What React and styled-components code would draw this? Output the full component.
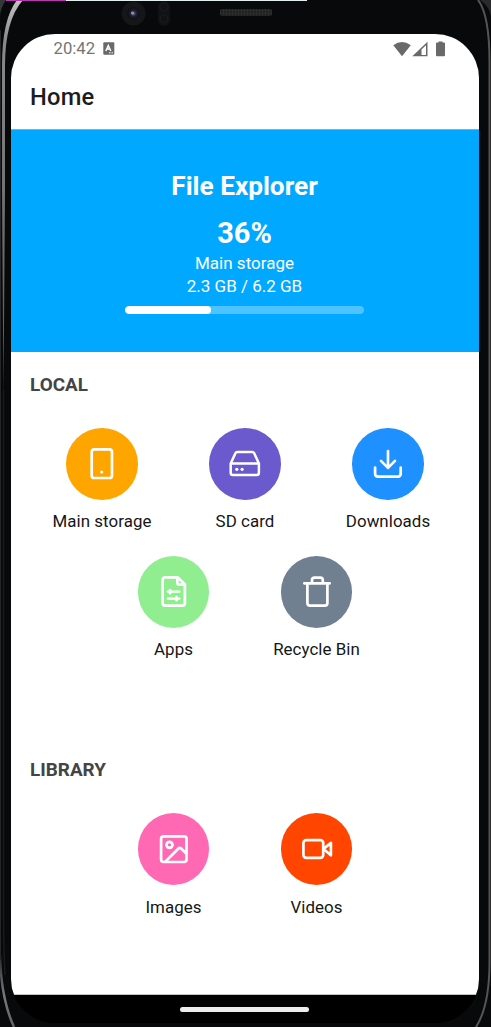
import React from "react";
import styled, { createGlobalStyle } from "styled-components";

const GlobalStyle = createGlobalStyle`
  * { box-sizing: border-box; }
  body { margin: 0; background: #08090a; font-family: Roboto, "Noto Sans", sans-serif; }
`;

const Phone = styled.div`
  position: relative;
  width: 491px;
  height: 1027px;
  overflow: hidden;
  padding: 34px 12px 4px 11px;
  background: #08090a;
`;

const Hardware = styled.svg`
  position: absolute;
  inset: 0;
  pointer-events: none;
`;

const Screen = styled.main`
  position: relative;
  display: flex;
  flex-direction: column;
  width: 468px;
  height: 989px;
  overflow: hidden;
  background: linear-gradient(#fff 960px, #000 960px);
  border-radius: 44px;
`;

const StatusBar = styled.div`
  display: flex;
  align-items: center;
  height: 29px;
  padding: 0 33px 0 42.5px;
  color: #757575;
  font-size: 16.7px;
  flex: none;

  svg { display: block; }
`;

const Keyboard = styled.svg`
  margin-left: 8px;
`;

const StatusIcons = styled.svg`
  margin-left: auto;
`;

const Header = styled.header`
  display: flex;
  align-items: center;
  height: 67px;
  padding: 1px 19px 0;
  border-bottom: 1px solid #6fb5e2;
  color: #1c1c1e;
  font-size: 23.7px;
  font-weight: 500;
  letter-spacing: 0.2px;
  flex: none;
`;

const Summary = styled.section`
  display: flex;
  flex-direction: column;
  align-items: center;
  height: 222px;
  padding: 40px 1px 0 0;
  background: #00a9ff;
  color: #fff;
  flex: none;
`;

const AppName = styled.h1`
  margin: 0 0 14px;
  font-size: 26.2px;
  line-height: 32px;
  font-weight: 700;
`;

const Percent = styled.div`
  font-size: 29px;
  line-height: 34px;
  margin-bottom: 2px;
  font-weight: 700;
`;

const StorageLine = styled.div`
  font-size: 17px;
  line-height: 23px;
`;

const Track = styled.div`
  width: 239px;
  height: 8px;
  margin: 8px 1px 0 0;
  overflow: hidden;
  border-radius: 4px;
  background: #4dc3ff;
`;

const Fill = styled.div`
  width: ${(p) => p.$value}%;
  height: 100%;
  border-radius: 4px;
  background: #fff;
`;

const Section = styled.section`
  height: ${(p) => p.$height}px;
  padding-top: ${(p) => p.$top}px;
  flex: none;
`;

const SectionTitle = styled.h2`
  margin: 0 0 31px;
  padding-left: 19px;
  color: #444;
  font-size: 18.9px;
  line-height: 24px;
  font-weight: 700;
`;

const Grid = styled.div`
  display: flex;
  flex-wrap: wrap;
  justify-content: center;
  row-gap: 24px;
  padding: 0 19.5px;
`;

const Item = styled.div`
  display: flex;
  flex-direction: column;
  align-items: center;
  width: 143px;
  height: 104px;
`;

const Disc = styled.div`
  display: grid;
  place-items: center;
  width: 71.5px;
  height: 71.5px;
  flex: none;
  border-radius: 50%;
  background: ${(p) => p.$color};
`;

const Glyph = styled.svg`
  fill: none;
  stroke: #fff;
  stroke-width: 2.7;
  stroke-linecap: round;
  stroke-linejoin: round;
`;

const Label = styled.div`
  margin-top: ${(p) => p.$gap}px;
  color: #161616;
  font-size: 16.9px;
  line-height: 24px;
  letter-spacing: 0.05px;
  white-space: nowrap;
`;

const NavBar = styled.nav`
  display: flex;
  justify-content: center;
  margin-top: auto;
  height: 29px;
  padding: 12px 1px 0 0;
  border-top: 1px solid #c4c4c4;
  background: #000;
  flex: none;
`;

const Handle = styled.div`
  width: 129px;
  height: 5px;
  border-radius: 3px;
  background: #ededed;
`;

const glyphs = {
  phone: (
    <>
      <rect x="7.7" y="3.4" width="20.3" height="28.6" rx="2.6" />
      <circle cx="17.7" cy="26" r="1.6" fill="#fff" stroke="none" />
    </>
  ),
  drive: (
    <>
      <path d="M3.700 17.5 8.400 7.200Q9 6 10.400 6H25.200Q26.600 6 27.200 7.200L31.900 17.5V26.700Q31.900 29 29.600 29H6Q3.700 29 3.700 26.700ZM3.700 17.5H31.900" strokeWidth="2.5" />
      <circle cx="9.8" cy="23.3" r="1.6" fill="#fff" stroke="none" />
      <circle cx="15.1" cy="23.3" r="1.6" fill="#fff" stroke="none" />
    </>
  ),
  download: <path d="M18 5V22M11 14.9 18 21.9 25 14.9M5.1 21.5V27.8Q5.1 30.6 7.9 30.6H27.9Q30.7 30.6 30.7 27.8V21.5" />,
  apps: (
    <>
      <path d="M21.8 3.4H9.2Q6.6 3.4 6.6 6V29Q6.6 31.6 9.2 31.6H26.3Q28.9 31.6 28.9 29V10.5ZM21.3 3.8V8.5Q21.3 10.7 23.5 10.7H28.5" />
      <path d="M11.8 17.7H23.5M11.8 24.7H23.5" strokeWidth="2.3" />
      <path d="M14.1 16.2V19.2M20.5 23.2V26.2" strokeWidth="2.8" />
    </>
  ),
  trash: <path d="M5.3 9.3H30.7M8.4 9.3V29Q8.4 31.7 11.1 31.7H25.7Q28.4 31.7 28.4 29V9.3M13 9V6.2Q13 3.7 15.5 3.7H21.3Q23.8 3.7 23.8 6.2V9" />,
  image: (
    <>
      <rect x="5.1" y="5.3" width="25.4" height="25.7" rx="2.4" />
      <circle cx="13.5" cy="13.8" r="3" />
      <path d="M9.5 30.5 22.5 17.5Q23.8 16.2 25.1 17.5L30.5 22.7" />
    </>
  ),
  video: (
    <>
      <rect x="4.4" y="9.1" width="19.8" height="17.7" rx="2.8" />
      <path d="M24.5 17.9 31.9 11.9V24.3Z" />
    </>
  ),
};

const local = [
  { label: "Main storage", icon: "phone", color: "#ffa500" },
  { label: "SD card", icon: "drive", color: "#6a5acd" },
  { label: "Downloads", icon: "download", color: "#1e90ff" },
  { label: "Apps", icon: "apps", color: "#90ee90" },
  { label: "Recycle Bin", icon: "trash", color: "#708090" },
];

const library = [
  { label: "Images", icon: "image", color: "#ff69b4" },
  { label: "Videos", icon: "video", color: "#ff4500" },
];

function Shortcuts({ items, labelGap }) {
  return (
    <Grid>
      {items.map((item) => (
        <Item key={item.label}>
          <Disc $color={item.color}>
            <Glyph width="36" height="36" viewBox="0 0 36 36">{glyphs[item.icon]}</Glyph>
          </Disc>
          <Label $gap={labelGap}>{item.label}</Label>
        </Item>
      ))}
    </Grid>
  );
}

function PhoneHardware() {
  return (
    <Hardware width="491" height="1027" viewBox="0 0 491 1027" fill="none">
      <defs>
        <linearGradient id="edge" gradientUnits="userSpaceOnUse" x1="0" y1="0" x2="0" y2="1027">
          <stop offset="0" stopColor="#c2c2c2" />
          <stop offset="0.04" stopColor="#8a8a8a" />
          <stop offset="0.2" stopColor="#707070" />
          <stop offset="0.33" stopColor="#606060" />
          <stop offset="0.42" stopColor="#17191a" />
          <stop offset="0.92" stopColor="#17191a" />
          <stop offset="0.97" stopColor="#77797c" />
          <stop offset="1" stopColor="#606264" />
        </linearGradient>
        <radialGradient id="lens">
          <stop offset="0" stopColor="#6b6b94" />
          <stop offset="0.35" stopColor="#202034" />
          <stop offset="0.7" stopColor="#101115" />
          <stop offset="1" stopColor="#18191b" />
        </radialGradient>
        <pattern id="mesh" width="3" height="3" patternUnits="userSpaceOnUse">
          <rect width="3" height="3" fill="#202020" />
          <circle cx="1.5" cy="1.5" r="0.9" fill="#343434" />
        </pattern>
      </defs>
      <path d="M23 0H17Q2 19 2 66V190L3.500 400L5 190V66Q5 20 23 0Z" fill="url(#edge)" />
      <path d="M3.500 390V900Q3.500 950 5 975" stroke="#191b1c" strokeWidth="1.500" />
      <path d="M0 955Q1 999 14 1027" stroke="url(#edge)" strokeWidth="2.500" />
      <path d="M.5 30V960" stroke="#242627" />
      <path d="M478 0Q489.500 15 489.500 62V962Q489.500 1006 476 1027" stroke="#555553" strokeWidth="2" />
      <path d="M0 0H6Q0 9 0 17Z" fill="#343638" />
      <path d="M491 0H480Q490 7 491 17Z" fill="#292a2b" />
      <path d="M6 .5H66" stroke="#b936b1" />
      <path d="M66 .5H307" stroke="#e5eeee" />
      <circle cx="133.500" cy="13.500" r="12" fill="#151617" />
      <circle cx="133.500" cy="13.500" r="8" fill="url(#lens)" />
      <circle cx="132.500" cy="13" r="1.500" fill="#9292bd" />
      <rect x="158" y="1" width="12" height="25" rx="6" fill="#111213" />
      <circle cx="164" cy="7" r="4" stroke="#191a1b" />
      <circle cx="164" cy="19" r="4" stroke="#191a1b" />
      <rect x="220" y="9" width="52" height="7" rx="2" fill="url(#mesh)" />
    </Hardware>
  );
}

export default function App() {
  return (
    <>
      <GlobalStyle />
      <Phone>
        <PhoneHardware />
        <Screen>
          <StatusBar>
            <span>20:42</span>
            <Keyboard width="12" height="13" viewBox="0 0 12 13">
              <rect x="0.300" y="0.300" width="11" height="12.400" rx="1" fill="#696969" />
              <path d="M2.800 9 5.300 3.500 7.800 9M3.800 7H6.800" fill="none" stroke="#fff" strokeWidth="1.500" />
              <path d="M6 10.800H10" stroke="#fff" strokeDasharray="1 .5" />
            </Keyboard>
            <StatusIcons width="53" height="16" viewBox="0 0 53 16" fill="#696969">
              <path d="M.3 4.300Q9 -2.500 17.800 4.300L9 15.200Z" />
              <path fillRule="evenodd" d="M19.300 15.300 34.500.8V15.300ZM28.500 8.500V14H33V4.200Z" />
              <path d="M45.500 1.500V.5H49.500V1.500H51Q52 1.500 52 2.500V14.300Q52 15.300 51 15.300H44Q43 15.300 43 14.300V2.500Q43 1.500 44 1.500Z" />
            </StatusIcons>
          </StatusBar>
          <Header>Home</Header>
          <Summary>
            <AppName>File Explorer</AppName>
            <Percent>36%</Percent>
            <StorageLine>Main storage</StorageLine>
            <StorageLine>2.3 GB / 6.2 GB</StorageLine>
            <Track><Fill $value={36} /></Track>
          </Summary>
          <Section $height={386} $top={21}>
            <SectionTitle>LOCAL</SectionTitle>
            <Shortcuts items={local} labelGap={9.5} />
          </Section>
          <Section $height={250} $top={20}>
            <SectionTitle>LIBRARY</SectionTitle>
            <Shortcuts items={library} labelGap={10.5} />
          </Section>
          <NavBar><Handle /></NavBar>
        </Screen>
      </Phone>
    </>
  );
}
